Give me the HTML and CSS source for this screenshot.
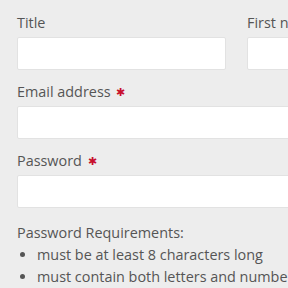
FILE: index.html
```
<!DOCTYPE html>
<html lang="en">
<head>
<meta charset="UTF-8">
<meta name="viewport" content="width=device-width, initial-scale=1.0">
<title>Register</title>
<link rel="stylesheet" href="styles.css">
</head>
<body>

<form class="register-form">
  <div class="form-row">
    <div class="field field-title">
      <label>Title</label>
      <input type="text">
    </div>
    <div class="field field-first">
      <label>First name</label>
      <input type="text">
    </div>
  </div>

  <div class="field">
    <label>Email address <span class="required">&#x2731;</span></label>
    <input type="email">
  </div>

  <div class="field">
    <label>Password <span class="required">&#x2731;</span></label>
    <input type="password">
  </div>

  <div class="requirements">
    <p>Password Requirements:</p>
    <ul>
      <li>must be at least 8 characters long</li>
      <li>must contain both letters and numbers</li>
    </ul>
  </div>
</form>

</body>
</html>
```

FILE: styles.css
```
body {
  margin: 0;
  padding: 0;
  background: #ededed;
  color: #555;
  font-family: 'Open Sans', sans-serif;
  font-size: 14.4px;
  overflow: hidden;
}

.register-form {
  width: 480px;
  padding: 13px 17px 0;
}

.form-row {
  display: flex;
  gap: 21px;
}

.field-title {
  width: 209px;
}

.field-first {
  flex: 1;
}

.field {
  margin-bottom: 12px;
}

.field label {
  display: block;
  line-height: 20px;
  margin-bottom: 4px;
}

.required {
  color: #c8102e;
  font-size: 11px;
  vertical-align: 1px;
  margin-left: 2px;
}

.field input {
  display: block;
  box-sizing: border-box;
  width: 100%;
  height: 33px;
  margin: 0;
  border: 1px solid #e2e2e2;
  border-radius: 2px;
  background: #fff;
}

.requirements {
  line-height: 22px;
}

.requirements p {
  margin: 0;
  padding-top: 2px;
}

.requirements ul {
  margin: 0;
  padding-left: 20px;
  white-space: nowrap;
}
```
